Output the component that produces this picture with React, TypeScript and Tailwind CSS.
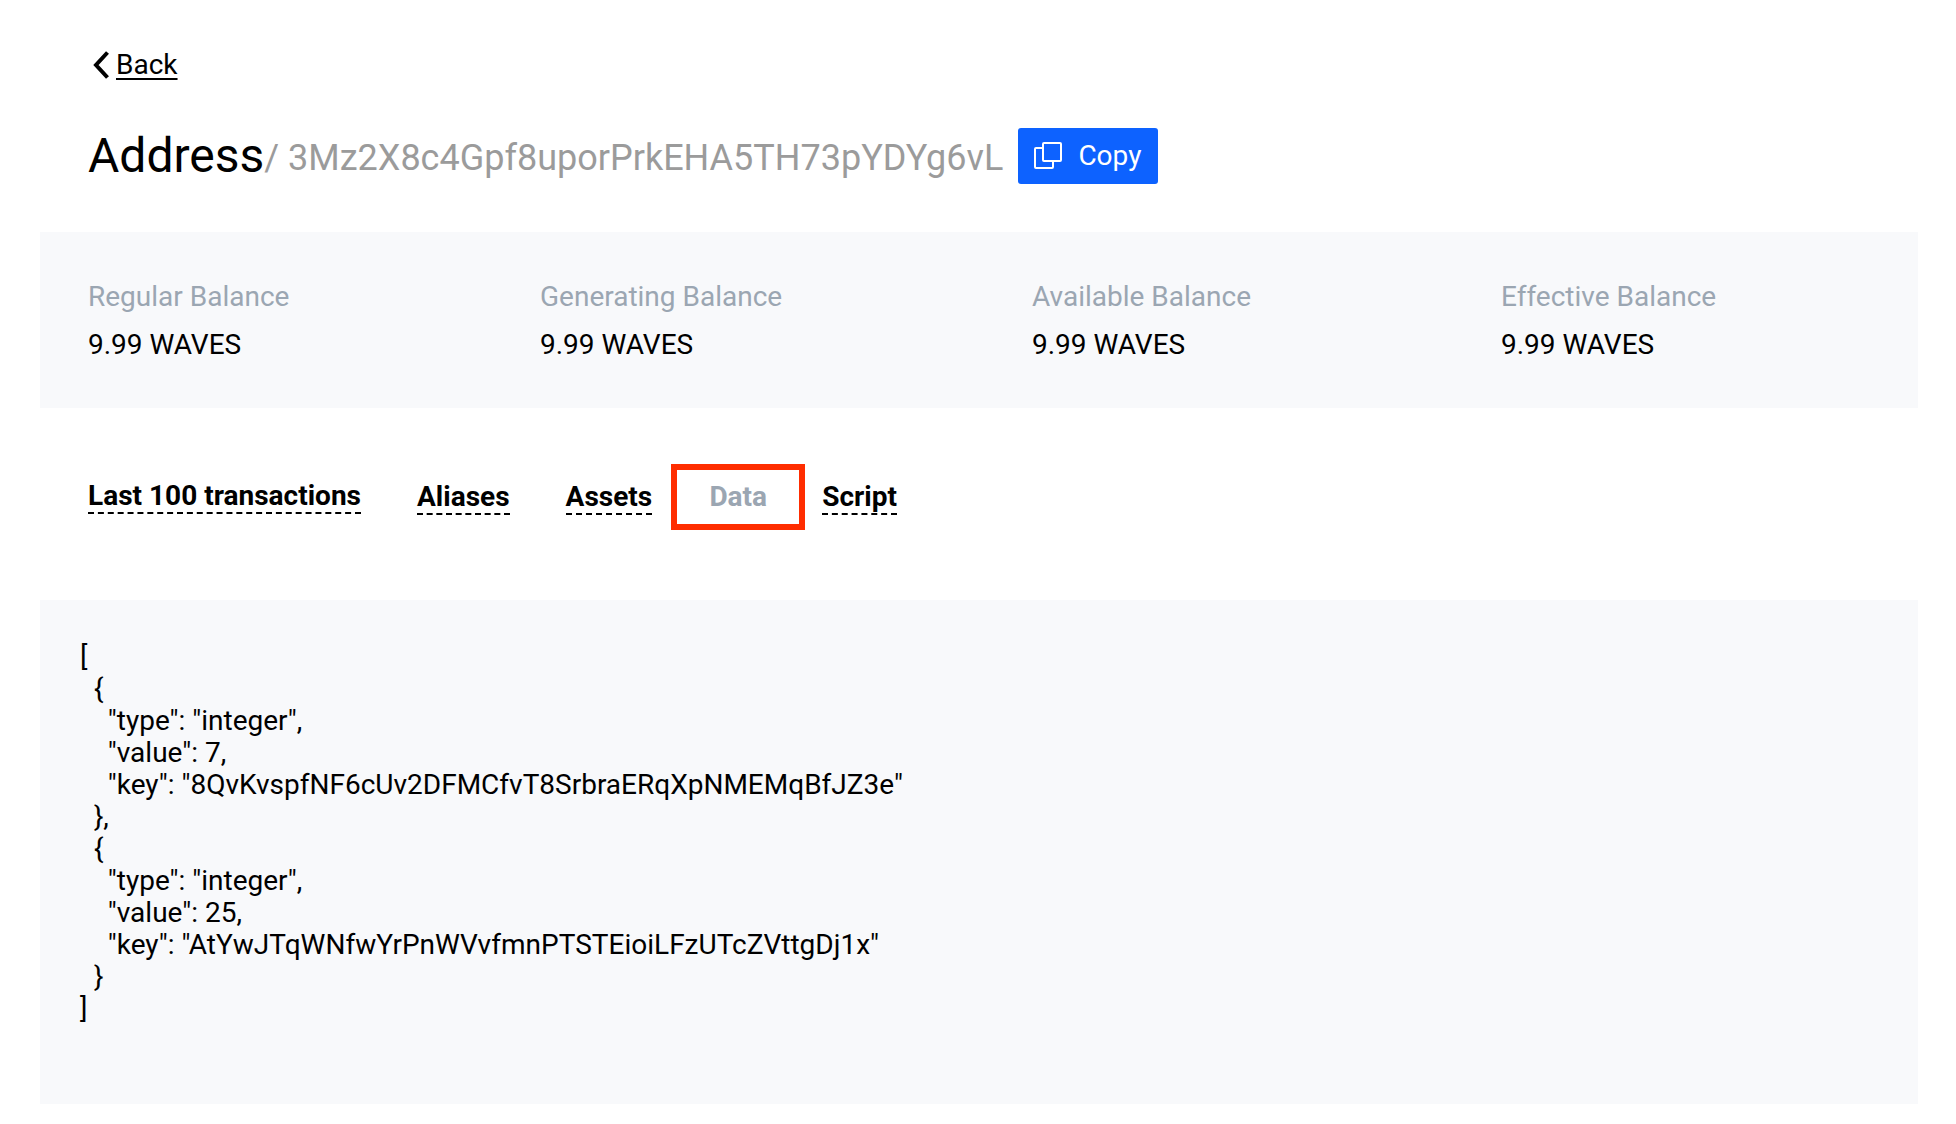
import React from "react";

const balances = [
  { label: "Regular Balance", w: "w-[452px]" },
  { label: "Generating Balance", w: "w-[492px]" },
  { label: "Available Balance", w: "w-[469px]" },
  { label: "Effective Balance", w: "w-[300px]" },
];

const code = `[
  {
    "type": "integer",
    "value": 7,
    "key": "8QvKvspfNF6cUv2DFMCfvT8SrbraERqXpNMEMqBfJZ3e"
  },
  {
    "type": "integer",
    "value": 25,
    "key": "AtYwJTqWNfwYrPnWVvfmnPTSTEioiLFzUTcZVttgDj1x"
  }
]`;

function Tab({ children }: { children: React.ReactNode }) {
  return (
    <span className="border-b-2 border-dashed border-black text-[28px] leading-[32px] font-bold tracking-[0.01px] text-black">
      {children}
    </span>
  );
}

export default function App() {
  return (
    <div className="min-h-[1124px] bg-white font-['Roboto',sans-serif] text-black">
      <div className="pb-5 pl-10 pr-[38px]">
        <div className="flex items-center pl-[52px] pt-[49px]">
          <svg width="20" height="28" viewBox="0 0 20 28" fill="none" className="mr-[4px]">
            <path d="M15.5 1.5 L4 14 L15.5 26.5" stroke="black" strokeWidth="4" />
          </svg>
          <span className="text-[28px] leading-[32px] underline decoration-2 underline-offset-[4px]">Back</span>
        </div>
        <div className="flex items-center pl-12 pt-[47px]">
          <span className="text-[48px] leading-[56px]">Address</span>
          <span className="mt-[4px] text-[36px] leading-[44px] text-[#9b9b9b]">/ 3Mz2X8c4Gpf8uporPrkEHA5TH73pYDYg6vL</span>
          <button className="ml-[15px] flex h-14 w-[140px] items-center rounded-[3px] bg-[#0d62ff] pl-4 text-[28px] text-white">
            <svg width="28" height="28" viewBox="0 0 28 28" fill="none" stroke="white" strokeWidth="2" className="mr-4">
              <rect x="9" y="1" width="18" height="18" rx="1" />
              <path d="M9 6 H2 A1 1 0 0 0 1 7 V25 A1 1 0 0 0 2 26 H18 A1 1 0 0 0 19 25 V19" />
            </svg>
            Copy
          </button>
        </div>
        <div className="mt-12 flex h-[176px] bg-[#f8f9fb] pl-12 pt-[49px]">
          {balances.map((b) => (
            <div key={b.label} className={b.w}>
              <div className="text-[28px] leading-[32px] text-[#9ba6b2]">{b.label}</div>
              <div className="mt-4 text-[28px] leading-[32px]">9.99 WAVES</div>
            </div>
          ))}
        </div>
        <div className="h-[192px] pl-12 pt-[56px]">
          <div className="flex h-[66px] items-center">
            <Tab>Last 100 transactions</Tab>
            <div className="ml-14"><Tab>Aliases</Tab></div>
            <div className="ml-14"><Tab>Assets</Tab></div>
            <div className="ml-[19px] flex h-[66px] w-[134px] items-center justify-center border-[6px] border-[#ff2d00] text-[28px] font-bold text-[#9ba6b2]">
              Data
            </div>
            <div className="ml-[17px]"><Tab>Script</Tab></div>
          </div>
        </div>
        <div className="h-[504px] bg-[#f8f9fb] pl-10 pt-[41px]">
          <pre className="font-['Roboto',sans-serif] text-[28px] leading-[32px]">{code}</pre>
        </div>
      </div>
    </div>
  );
}
